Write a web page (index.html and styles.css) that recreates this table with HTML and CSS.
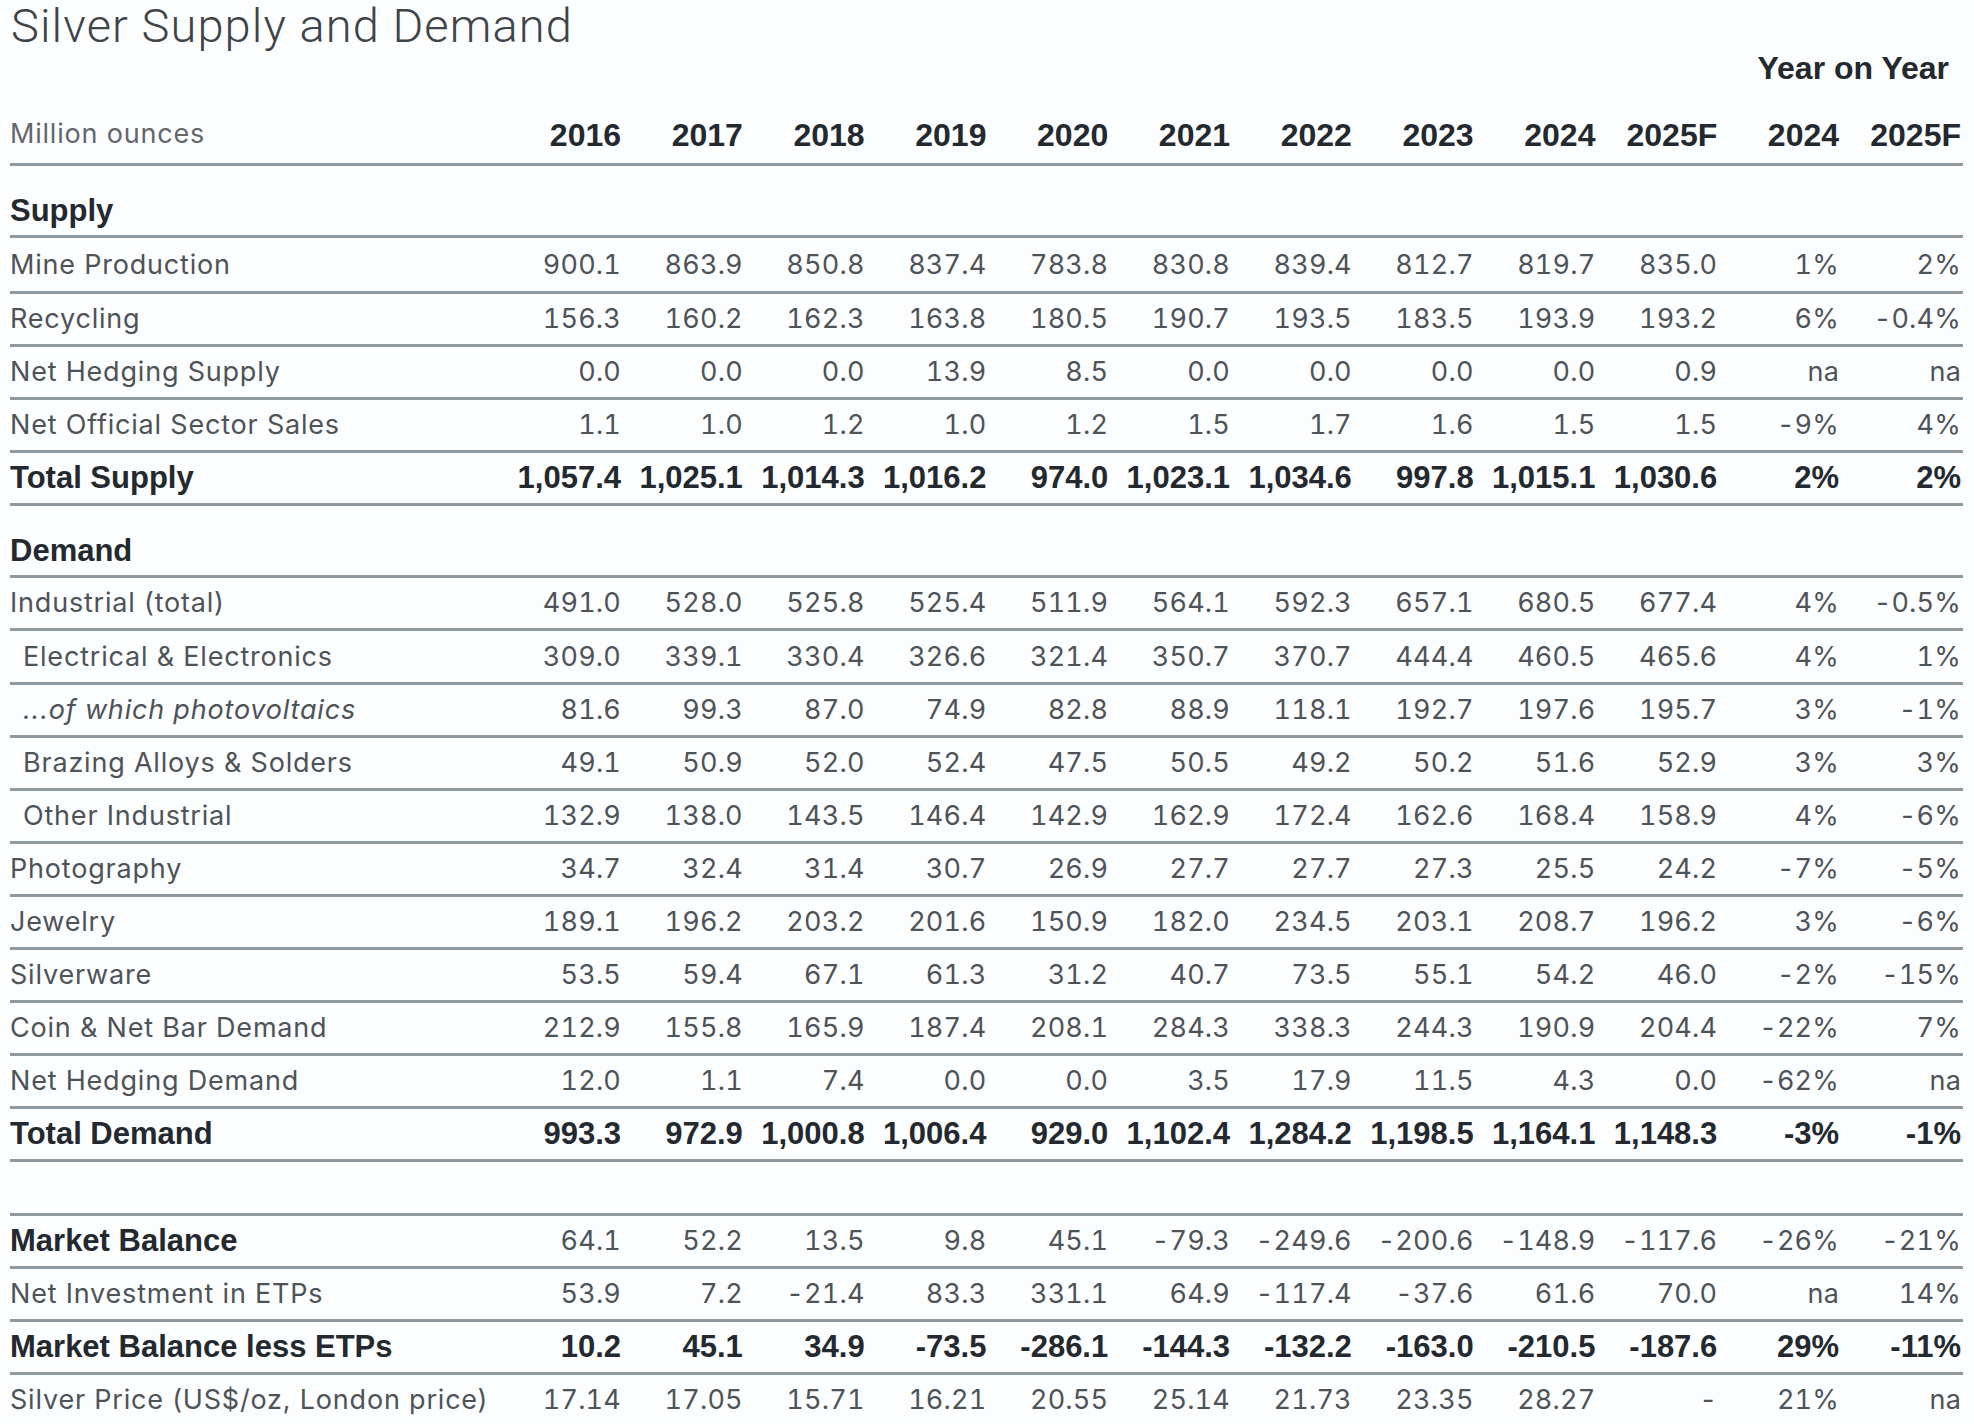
FILE: index.html
```html
<!DOCTYPE html>
<html lang="en">
<head>
<meta charset="utf-8">
<title>Silver Supply and Demand</title>
<link rel="stylesheet" href="styles.css">
</head>
<body>
<main class="page">
  <h1 class="title">Silver Supply and Demand</h1>
  <table class="sd">
    <colgroup>
      <col class="c-label"><col class="c-first">
      <col class="c-num"><col class="c-num"><col class="c-num"><col class="c-num"><col class="c-num">
      <col class="c-num"><col class="c-num"><col class="c-num"><col class="c-num">
      <col class="c-num"><col class="c-num">
    </colgroup>
    <thead>
      <tr class="yoy-row">
        <th colspan="11"></th>
        <th colspan="2" class="yoy">Year on Year</th>
      </tr>
      <tr class="head-row">
        <th class="unit">Million ounces</th>
        <th>2016</th><th>2017</th><th>2018</th><th>2019</th><th>2020</th>
        <th>2021</th><th>2022</th><th>2023</th><th>2024</th><th>2025F</th>
        <th>2024</th><th>2025F</th>
      </tr>
    </thead>
    <tbody>
      <tr class="section"><td class="lbl">Supply</td><td colspan="12"></td></tr>
      <tr class="first"><td class="lbl">Mine Production</td><td>900.1</td><td>863.9</td><td>850.8</td><td>837.4</td><td>783.8</td><td>830.8</td><td>839.4</td><td>812.7</td><td>819.7</td><td>835.0</td><td>1%</td><td>2%</td></tr>
      <tr><td class="lbl">Recycling</td><td>156.3</td><td>160.2</td><td>162.3</td><td>163.8</td><td>180.5</td><td>190.7</td><td>193.5</td><td>183.5</td><td>193.9</td><td>193.2</td><td>6%</td><td>-0.4%</td></tr>
      <tr><td class="lbl">Net Hedging Supply</td><td>0.0</td><td>0.0</td><td>0.0</td><td>13.9</td><td>8.5</td><td>0.0</td><td>0.0</td><td>0.0</td><td>0.0</td><td>0.9</td><td>na</td><td>na</td></tr>
      <tr><td class="lbl">Net Official Sector Sales</td><td>1.1</td><td>1.0</td><td>1.2</td><td>1.0</td><td>1.2</td><td>1.5</td><td>1.7</td><td>1.6</td><td>1.5</td><td>1.5</td><td>-9%</td><td>4%</td></tr>
      <tr class="total"><td class="lbl">Total Supply</td><td>1,057.4</td><td>1,025.1</td><td>1,014.3</td><td>1,016.2</td><td>974.0</td><td>1,023.1</td><td>1,034.6</td><td>997.8</td><td>1,015.1</td><td>1,030.6</td><td>2%</td><td>2%</td></tr>

      <tr class="section"><td class="lbl">Demand</td><td colspan="12"></td></tr>
      <tr><td class="lbl">Industrial (total)</td><td>491.0</td><td>528.0</td><td>525.8</td><td>525.4</td><td>511.9</td><td>564.1</td><td>592.3</td><td>657.1</td><td>680.5</td><td>677.4</td><td>4%</td><td>-0.5%</td></tr>
      <tr><td class="lbl sub">Electrical &amp; Electronics</td><td>309.0</td><td>339.1</td><td>330.4</td><td>326.6</td><td>321.4</td><td>350.7</td><td>370.7</td><td>444.4</td><td>460.5</td><td>465.6</td><td>4%</td><td>1%</td></tr>
      <tr><td class="lbl sub ital">...of which photovoltaics</td><td>81.6</td><td>99.3</td><td>87.0</td><td>74.9</td><td>82.8</td><td>88.9</td><td>118.1</td><td>192.7</td><td>197.6</td><td>195.7</td><td>3%</td><td>-1%</td></tr>
      <tr><td class="lbl sub">Brazing Alloys &amp; Solders</td><td>49.1</td><td>50.9</td><td>52.0</td><td>52.4</td><td>47.5</td><td>50.5</td><td>49.2</td><td>50.2</td><td>51.6</td><td>52.9</td><td>3%</td><td>3%</td></tr>
      <tr><td class="lbl sub">Other Industrial</td><td>132.9</td><td>138.0</td><td>143.5</td><td>146.4</td><td>142.9</td><td>162.9</td><td>172.4</td><td>162.6</td><td>168.4</td><td>158.9</td><td>4%</td><td>-6%</td></tr>
      <tr><td class="lbl">Photography</td><td>34.7</td><td>32.4</td><td>31.4</td><td>30.7</td><td>26.9</td><td>27.7</td><td>27.7</td><td>27.3</td><td>25.5</td><td>24.2</td><td>-7%</td><td>-5%</td></tr>
      <tr><td class="lbl">Jewelry</td><td>189.1</td><td>196.2</td><td>203.2</td><td>201.6</td><td>150.9</td><td>182.0</td><td>234.5</td><td>203.1</td><td>208.7</td><td>196.2</td><td>3%</td><td>-6%</td></tr>
      <tr><td class="lbl">Silverware</td><td>53.5</td><td>59.4</td><td>67.1</td><td>61.3</td><td>31.2</td><td>40.7</td><td>73.5</td><td>55.1</td><td>54.2</td><td>46.0</td><td>-2%</td><td>-15%</td></tr>
      <tr><td class="lbl">Coin &amp; Net Bar Demand</td><td>212.9</td><td>155.8</td><td>165.9</td><td>187.4</td><td>208.1</td><td>284.3</td><td>338.3</td><td>244.3</td><td>190.9</td><td>204.4</td><td>-22%</td><td>7%</td></tr>
      <tr><td class="lbl">Net Hedging Demand</td><td>12.0</td><td>1.1</td><td>7.4</td><td>0.0</td><td>0.0</td><td>3.5</td><td>17.9</td><td>11.5</td><td>4.3</td><td>0.0</td><td>-62%</td><td>na</td></tr>
      <tr class="total"><td class="lbl">Total Demand</td><td>993.3</td><td>972.9</td><td>1,000.8</td><td>1,006.4</td><td>929.0</td><td>1,102.4</td><td>1,284.2</td><td>1,198.5</td><td>1,164.1</td><td>1,148.3</td><td>-3%</td><td>-1%</td></tr>

      <tr class="spacer"><td colspan="13"></td></tr>
      <tr><td class="lbl strong">Market Balance</td><td>64.1</td><td>52.2</td><td>13.5</td><td>9.8</td><td>45.1</td><td>-79.3</td><td>-249.6</td><td>-200.6</td><td>-148.9</td><td>-117.6</td><td>-26%</td><td>-21%</td></tr>
      <tr><td class="lbl">Net Investment in ETPs</td><td>53.9</td><td>7.2</td><td>-21.4</td><td>83.3</td><td>331.1</td><td>64.9</td><td>-117.4</td><td>-37.6</td><td>61.6</td><td>70.0</td><td>na</td><td>14%</td></tr>
      <tr class="total"><td class="lbl">Market Balance less ETPs</td><td>10.2</td><td>45.1</td><td>34.9</td><td>-73.5</td><td>-286.1</td><td>-144.3</td><td>-132.2</td><td>-163.0</td><td>-210.5</td><td>-187.6</td><td>29%</td><td>-11%</td></tr>
      <tr><td class="lbl">Silver Price (US$/oz, London price)</td><td>17.14</td><td>17.05</td><td>15.71</td><td>16.21</td><td>20.55</td><td>25.14</td><td>21.73</td><td>23.35</td><td>28.27</td><td>-</td><td>21%</td><td>na</td></tr>
    </tbody>
  </table>
</main>
</body>
</html>
```
FILE: styles.css
```css
html, body {
  margin: 0;
  padding: 0;
  background: #fcfdfe;
}

.page {
  padding: 0 11px 0 10px;
  color: #4e5358;
  font-family: "Inter", "Liberation Sans", sans-serif;
}

.title {
  margin: 0;
  font-family: "Roboto", "Liberation Sans", sans-serif;
  font-weight: 300;
  font-size: 47px;
  line-height: 52px;
  color: #3f4448;
  letter-spacing: 1.1px;
  padding-left: 1px;
}

.sd {
  width: 1953px;
  table-layout: fixed;
  border-collapse: separate;
  border-spacing: 0;
}

.c-label { width: 488px; }
.c-first { width: 125px; }
.c-num { width: 121.8px; }

.sd th,
.sd td {
  padding: 0 2px 0 0;
  text-align: right;
  white-space: nowrap;
  font-size: 27px;
  font-weight: 400;
}

.yoy-row th {
  height: 52px;
  vertical-align: top;
  padding: 0;
}

.yoy-row th.yoy {
  font-family: "Liberation Sans", sans-serif;
  font-weight: 700;
  font-size: 32px;
  color: #23292e;
  padding: 1px 14px 0 0;
  line-height: 30px;
}

.head-row th {
  height: 56px;
  border-bottom: 3px solid #8f9ba1;
  vertical-align: middle;
  font-family: "Liberation Sans", sans-serif;
  font-weight: 700;
  font-size: 32px;
  color: #23292e;
  padding-top: 2px;
}

.head-row th.unit {
  text-align: left;
  font-family: "Inter", "Liberation Sans", sans-serif;
  font-weight: 400;
  font-size: 27px;
  letter-spacing: 0.8px;
  color: #62676c;
  padding-top: 0;
  padding-bottom: 2px;
}

.sd td {
  height: 50.1px;
  border-bottom: 3px solid #8f9ba1;
  vertical-align: middle;
  color: #4e5358;
  line-height: 50px;
  font-variant-numeric: tabular-nums;
  letter-spacing: 0.2px;
}

.sd td.lbl {
  text-align: left;
  padding-left: 0;
  letter-spacing: 0.8px;
  font-variant-numeric: normal;
}

.sd td.sub { padding-left: 13px; }
.sd td.ital { font-style: italic; }

.sd tr.section td {
  vertical-align: bottom;
  line-height: 40px;
  padding-bottom: 4px;
  height: 65px;
}

.sd tr.section td.lbl,
.sd td.lbl.strong,
.sd tr.total td {
  font-family: "Liberation Sans", sans-serif;
  font-weight: 700;
  font-size: 31px;
  letter-spacing: 0;
  color: #23292e;
}

.sd tr.first td {
  height: 53px;
}
```
